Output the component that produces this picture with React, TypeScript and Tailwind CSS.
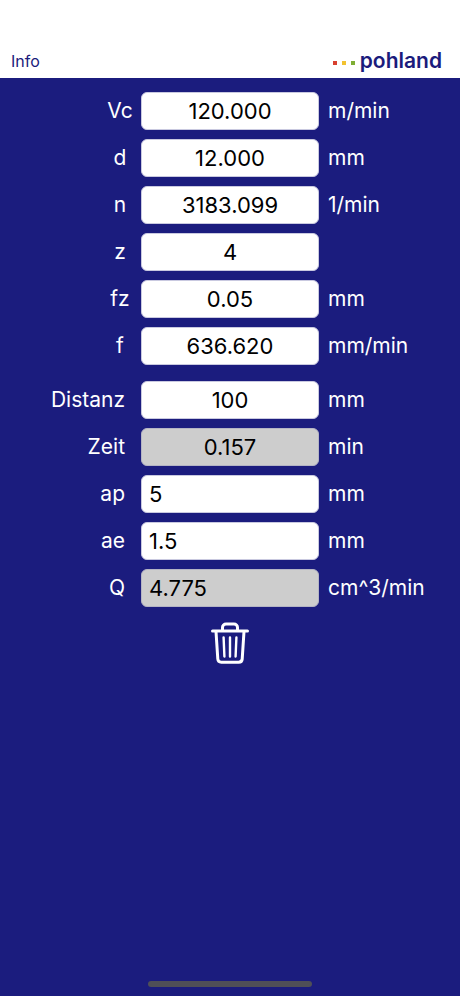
import { useState } from "react";

type Field = {
  id: string;
  label: string;
  value: string;
  unit: string;
  readOnly?: boolean;
  alignLeft?: boolean;
};

const cutting: Field[] = [
  { id: "vc", label: "Vc", value: "120.000", unit: "m/min" },
  { id: "d", label: "d", value: "12.000", unit: "mm" },
  { id: "n", label: "n", value: "3183.099", unit: "1/min" },
  { id: "z", label: "z", value: "4", unit: "" },
  { id: "fz", label: "fz", value: "0.05", unit: "mm" },
  { id: "f", label: "f", value: "636.620", unit: "mm/min" },
];

const machining: Field[] = [
  { id: "distanz", label: "Distanz", value: "100", unit: "mm" },
  { id: "zeit", label: "Zeit", value: "0.157", unit: "min", readOnly: true },
  { id: "ap", label: "ap", value: "5", unit: "mm", alignLeft: true },
  { id: "ae", label: "ae", value: "1.5", unit: "mm", alignLeft: true },
  { id: "q", label: "Q", value: "4.775", unit: "cm^3/min", readOnly: true, alignLeft: true },
];

const initial: Record<string, string> = Object.fromEntries(
  [...cutting, ...machining].map((f) => [f.id, f.value]),
);

function Row({
  field,
  value,
  centered,
  onChange,
}: {
  field: Field;
  value: string;
  centered?: boolean;
  onChange: (v: string) => void;
}) {
  return (
    <div className="grid grid-cols-[141fr_178fr_141fr] items-center">
      <label
        htmlFor={field.id}
        className={centered ? "w-[42px] justify-self-end text-center" : "pr-4 text-right"}
      >
        {field.label}
      </label>
      <input
        id={field.id}
        type="text"
        inputMode="decimal"
        value={value}
        readOnly={field.readOnly}
        onChange={(e) => onChange(e.target.value)}
        className={`h-[38px] w-full min-w-0 rounded-md border px-[7px] text-[22px] text-black outline-none ${
          field.alignLeft ? "text-left" : "text-center"
        } ${field.readOnly ? "border-[#b4b4c4] bg-[#cdcdcd]" : "border-[#c9c9e0] bg-white"}`}
      />
      <span className="pl-[9px] whitespace-nowrap">{field.unit}</span>
    </div>
  );
}

function Logo() {
  return (
    <div className="flex items-center text-[#1b1b7c]">
      <span className="mt-1 mr-[5px] flex gap-[5px]">
        <span className="size-1 bg-[#d8402f]" />
        <span className="size-1 bg-[#f2c230]" />
        <span className="size-1 bg-[#7fae35]" />
      </span>
      <span className="text-[21px] leading-[26px] font-semibold">pohland</span>
    </div>
  );
}

function TrashIcon() {
  return (
    <svg
      width="40"
      height="44"
      viewBox="0 0 40 44"
      fill="none"
      stroke="white"
      strokeWidth="3"
      strokeLinecap="round"
      strokeLinejoin="round"
      aria-hidden="true"
    >
      <path d="M2.5 10H37.5" />
      <path d="M12.5 9.5V6.5a3.5 3.5 0 0 1 3.5-3.5h8a3.5 3.5 0 0 1 3.5 3.5v3" />
      <path d="M6 10.5 7.8 38a3.5 3.5 0 0 0 3.5 3.2h17.4a3.5 3.5 0 0 0 3.5-3.2L34 10.5" />
      <path d="M13.6 16.5 14.4 35.5M20 16.5V35.5M26.4 16.5 25.6 35.5" strokeWidth="2.4" />
    </svg>
  );
}

export default function App() {
  const [values, setValues] = useState(initial);
  const renderRow = (field: Field, centered?: boolean) => (
    <Row
      key={field.id}
      field={field}
      centered={centered}
      value={values[field.id]}
      onChange={(v) => setValues({ ...values, [field.id]: v })}
    />
  );

  return (
    <div className="flex min-h-screen flex-col bg-[#1b1c7e] font-[Inter,'Liberation_Sans',sans-serif] text-[21px] leading-7 text-white">
      <header className="flex items-center justify-between bg-white pt-12 pr-[18px] pb-1 pl-[11px]">
        <button type="button" className="text-base leading-[26px] text-[#1b1b7c]">
          Info
        </button>
        <Logo />
      </header>
      <main className="flex flex-1 flex-col pt-[14px]">
        <div className="flex flex-col gap-[9px]">{cutting.map((f) => renderRow(f, true))}</div>
        <div className="mt-4 flex flex-col gap-[9px]">{machining.map((f) => renderRow(f))}</div>
        <button
          type="button"
          aria-label="Löschen"
          className="mt-[14px] self-center"
          onClick={() => setValues(Object.fromEntries(Object.keys(values).map((k) => [k, ""])))}
        >
          <TrashIcon />
        </button>
      </main>
      <footer className="flex justify-center pb-[9px]">
        <div className="h-[6px] w-[164px] rounded-full bg-[#4f4f57]" />
      </footer>
    </div>
  );
}
